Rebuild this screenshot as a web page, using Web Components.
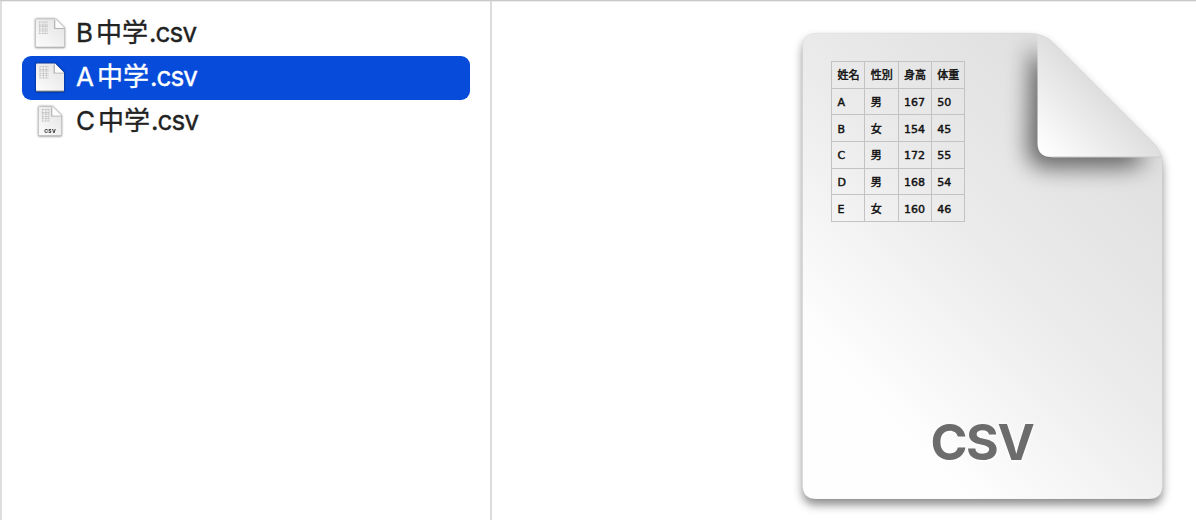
<!DOCTYPE html>
<html lang="ja">
<head>
<meta charset="utf-8">
<title>Finder</title>
<style>
  body {
    margin: 0;
    background: #fff;
    font-family: Inter, "Noto Sans CJK JP", sans-serif;
  }
</style>
</head>
<body>
<column-browser>
  <file-row slot="files" name="B中学.csv" icon="plain"></file-row>
  <file-row slot="files" name="A中学.csv" icon="dark" selected></file-row>
  <file-row slot="files" name="C中学.csv" icon="label"></file-row>
  <csv-document slot="preview" kind="CSV">
    <csv-table></csv-table>
  </csv-document>
</column-browser>

<script>
class ColumnBrowser extends HTMLElement {
  constructor() {
    super();
    this.attachShadow({ mode: 'open' }).innerHTML = `
      <style>
        :host {
          display: grid;
          grid-template-columns: 492px 1fr;
          box-sizing: border-box;
          height: 520px;
          overflow: hidden;
          border-top: 1px solid #c9c9c9;
          box-shadow: inset 0 1px #ececec;
        }
        .files {
          box-sizing: border-box;
          padding: 11px 20px 0;
          border-left: 2px solid #dedede;
          border-right: 2px solid #dcdcdc;
        }
        .preview {
          padding: 32px 0 0 310px;
        }
      </style>
      <div class="files"><slot name="files"></slot></div>
      <div class="preview"><slot name="preview"></slot></div>
    `;
  }
}

/* Small document icon: plain, dark (on the selection) or label (narrow, with its kind) */
class FileIcon extends HTMLElement {
  constructor() {
    super();
    this.attachShadow({ mode: 'open' });
  }

  connectedCallback() {
    const shapes = {
      plain: { x: 3.5, y: 4, w: 29, h: 28.5, fold: 9, rim: '#a9a9a9' },
      dark: { x: 4, y: 4.5, w: 28, h: 28, fold: 9, rim: '#353f58' },
      label: { x: 6.5, y: 3.5, w: 23, h: 29.5, fold: 9, rim: '#b0b0b0' }
    };
    const type = this.getAttribute('type');
    const { x, y, w, h, fold, rim } = shapes[type];
    const r = x + w;
    const b = y + h;
    const gridX = x + 3.5;
    const lines = [0, 3, 4.5, 7, 9, 11.5]
      .map(dy => `M${gridX} ${y + 3 + dy}h${type === 'label' ? 7 : 9}`).join('');

    this.shadowRoot.innerHTML = `
      <style>
        :host { display: block; width: 36px; height: 38px; }
        svg { display: block; overflow: visible; filter: drop-shadow(0 .8px .8px ${type === 'dark' ? '#0009' : '#0007'}); }
      </style>
      <svg width="36" height="38" viewBox="0 0 36 38">
        <defs>
          <linearGradient id="paper" x1="1" y1="0" x2=".2" y2="1">
            <stop offset="0" stop-color="#e2e2e2"/><stop offset="1" stop-color="#fafafa"/>
          </linearGradient>
        </defs>
        <path d="M${x + 1} ${y}H${r - fold}L${r} ${y + fold}V${b - 1}q0 1-1 1H${x + 1}q-1 0-1-1V${y + 1}q0-1 1-1z"
          fill="url(#paper)" stroke="${type === 'dark' ? 'none' : '#bcbcbc'}" stroke-width=".6"/>
        <path d="M${x} ${b - .3}H${r}" stroke="${rim}" stroke-width=".8"/>
        <path d="M${r - fold - .8} ${y + 1}V${y + fold + .5}H${r}" fill="none" stroke="#999" stroke-width="1.2" opacity=".7"/>
        <path d="M${r - fold} ${y + .3}V${y + fold - 1}q0 1 1 1H${r - .3}z" fill="#fcfcfc"/>
        <path d="${lines}" stroke="#999" stroke-width=".8" stroke-dasharray="2 .6" opacity=".55"/>
        <path d="M${gridX + .4} ${y + 3}v12M${gridX + 4} ${y + 3}v12M${gridX + 7} ${y + 3}v12" stroke="#aaa" stroke-width=".7" opacity=".5"/>
        ${type === 'label' ? '<text x="18.2" y="29.5" text-anchor="middle" font-family="Inter, sans-serif" font-size="5" font-weight="800" fill="#333" letter-spacing=".4">CSV</text>' : ''}
      </svg>
    `;
  }
}

class FileRow extends HTMLElement {
  constructor() {
    super();
    this.attachShadow({ mode: 'open' });
  }

  connectedCallback() {
    const [stem, extension] = this.getAttribute('name').split('.');
    this.shadowRoot.innerHTML = `
      <style>
        :host {
          display: flex;
          align-items: center;
          box-sizing: border-box;
          height: 44px;
          padding-left: 10px;
          border-radius: 9px;
          color: #222;
        }
        :host([selected]) {
          background: #064bda;
          color: #fff;
        }
        .name {
          margin-left: 8px;
          font-size: 26px;
          line-height: 42px;
          height: 44px;
          white-space: nowrap;
          -webkit-text-stroke: .35px currentColor;
        }
        .name::first-letter { margin-right: 3px; }
        .extension {
          margin-left: 1px;
          letter-spacing: -.9px;
        }
      </style>
      <file-icon type="${this.getAttribute('icon')}"></file-icon>
      <div class="name">${stem}<span class="extension">.${extension}</span></div>
    `;
  }
}

class CsvTable extends HTMLElement {
  constructor() {
    super();
    const rows = [
      ['姓名', '性別', '身高', '体重'],
      ['A', '男', '167', '50'],
      ['B', '女', '154', '45'],
      ['C', '男', '172', '55'],
      ['D', '男', '168', '54'],
      ['E', '女', '160', '46']
    ];
    this.attachShadow({ mode: 'open' }).innerHTML = `
      <style>
        :host { display: block; width: 134px; }
        table {
          width: 134px;
          height: 161px;
          table-layout: fixed;
          border-collapse: collapse;
          font: 11px/14px "DejaVu Sans", "Noto Sans CJK JP", sans-serif;
          color: #111;
          -webkit-text-stroke: .45px #111;
        }
        td {
          padding: 3px 0 0 5.5px;
          border: 1px solid #c3c3c3;
          white-space: nowrap;
        }
      </style>
      <table>${rows.map(row => `<tr>${row.map(cell => `<td>${cell}</td>`).join('')}</tr>`).join('')}</table>
    `;
  }
}

/* Large document with a folded corner; the slot holds what is printed on it */
class CsvDocument extends HTMLElement {
  constructor() {
    super();
    this.attachShadow({ mode: 'open' });
  }

  connectedCallback() {
    const outline = 'M14 0H226Q240 0 249 8L352 111Q360 119 360 134V452Q360 466 346 466H14Q0 466 0 452V14Q0 0 14 0Z';
    this.shadowRoot.innerHTML = `
      <style>
        :host {
          display: grid;
          width: 360px;
          height: 466px;
        }
        svg, .print { grid-area: 1 / 1; }
        svg { overflow: visible; }
        .sheet { filter: drop-shadow(0 6px 5px #00000070); }
        .print {
          display: flex;
          flex-direction: column;
          justify-content: space-between;
          padding: 28px 0 26px 29px;
          z-index: 1;
        }
        .kind {
          margin-left: -29px;
          text-align: center;
          font-size: 50px;
          font-weight: 700;
          line-height: 62px;
          letter-spacing: -1.3px;
          color: #6c6c6c;
          text-shadow: 0 0 4px #fff, 0 1px 3px #fff;
        }
      </style>
      <svg width="360" height="466" viewBox="-.5 0 360 466">
        <defs>
          <linearGradient id="paper" gradientUnits="userSpaceOnUse" x1="320" y1="80" x2="50" y2="350">
            <stop offset="0" stop-color="#dfdfdf"/>
            <stop offset=".5" stop-color="#ebebeb"/>
            <stop offset="1" stop-color="#fefefe"/>
          </linearGradient>
          <linearGradient id="flap" gradientUnits="userSpaceOnUse" x1="300" y1="60" x2="243" y2="117">
            <stop offset="0" stop-color="#dedede"/>
            <stop offset="1" stop-color="#fdfdfd"/>
          </linearGradient>
          <filter id="soft" x="-40%" y="-40%" width="180%" height="180%">
            <feGaussianBlur stdDeviation="11"/>
          </filter>
          <clipPath id="edge"><path d="${outline}"/></clipPath>
        </defs>
        <path class="sheet" d="${outline}" fill="url(#paper)"/>
        <g clip-path="url(#edge)">
          <path d="M228 14L345 124Q340 135 310 135H244Q225 135 225 114Z" fill="#000" opacity=".55" filter="url(#soft)"/>
          <path d="M235 2Q243 3 249 8L352 111Q356 116 358 124H249Q235 124 235 110Z" fill="url(#flap)"/>
          <path d="M249 124H358" stroke="#c9c9c9"/>
        </g>
        <path d="${outline}" fill="none" stroke="#00000008"/>
      </svg>
      <div class="print">
        <slot></slot>
        <div class="kind">${this.getAttribute('kind')}</div>
      </div>
    `;
  }
}

customElements.define('file-icon', FileIcon);
customElements.define('file-row', FileRow);
customElements.define('csv-table', CsvTable);
customElements.define('csv-document', CsvDocument);
customElements.define('column-browser', ColumnBrowser);
</script>
</body>
</html>
